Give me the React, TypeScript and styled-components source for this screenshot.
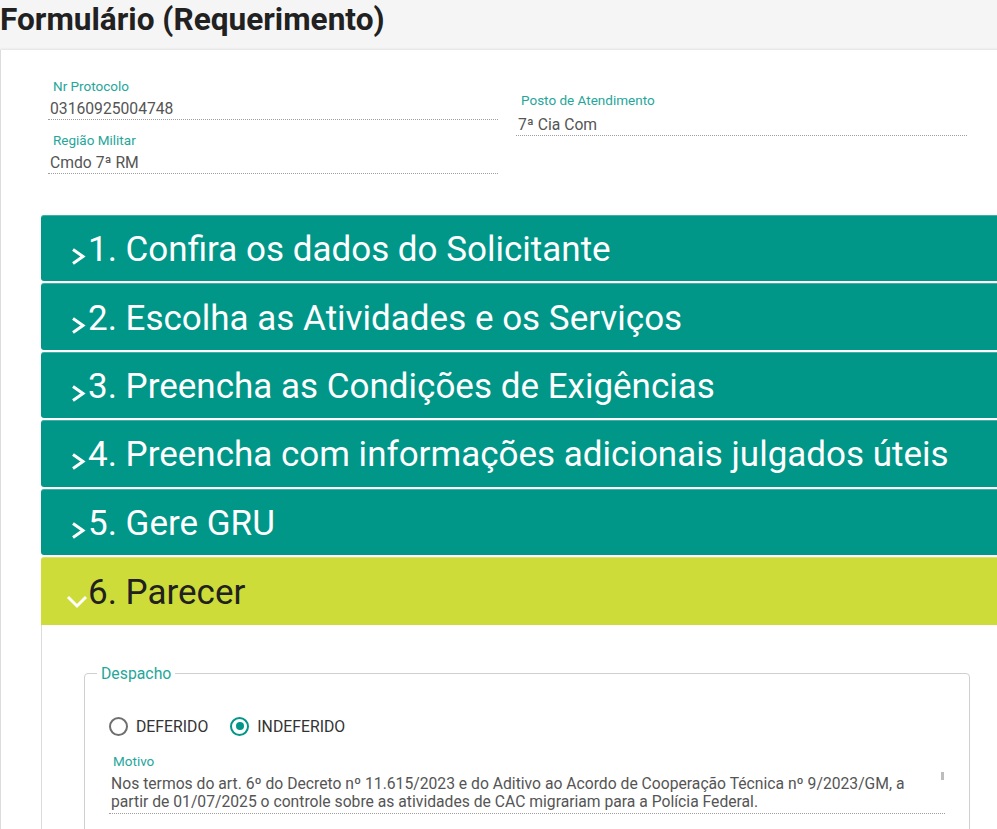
import React from "react";
import styled, { createGlobalStyle } from "styled-components";

const Global = createGlobalStyle`
  html, body { margin: 0; padding: 0; }
  body {
    background: #f5f5f5;
    overflow: hidden;
    font-family: Roboto, "Liberation Sans", Arial, sans-serif;
  }
  * { box-sizing: border-box; }
`;

const Page = styled.div`
  width: 997px;
  min-height: 829px;
  overflow: hidden;
`;

const Title = styled.h1`
  margin: 0;
  height: 50px;
  padding: 2px 0 0 0;
  font-size: 31.6px;
  line-height: 36px;
  font-weight: 700;
  color: #212121;
  white-space: nowrap;
`;

const Card = styled.div`
  width: 1060px;
  background: #fff;
  border-left: 1px solid #dcdcdc;
  box-shadow: 0 -1px 2px rgba(0, 0, 0, 0.08);
  padding-top: 29px;
  min-height: 779px;
`;

const FieldsGrid = styled.div`
  display: grid;
  grid-template-columns: 450px 451px;
  column-gap: 18px;
  padding-left: 47px;
`;

const Column = styled.div<{ $offset?: number }>`
  display: flex;
  flex-direction: column;
  gap: 13px;
  padding-top: ${(p) => p.$offset ?? 0}px;
`;

const Field = styled.div`
  display: flex;
  flex-direction: column;
`;

const FieldLabel = styled.div`
  font-size: 13.5px;
  line-height: 15px;
  color: #26a69a;
  padding-left: 5px;
  white-space: nowrap;
`;

const FieldValue = styled.div<{ $gap?: number }>`
  margin-top: ${(p) => p.$gap ?? 4}px;
  font-size: 15.7px;
  line-height: 21px;
  color: #555;
  padding-left: 2px;
  border-bottom: 1px dotted #9e9e9e;
  white-space: nowrap;
`;

const Accordion = styled.div`
  margin: 41px 0 0 40px;
  width: 972px;
`;

const ItemHeader = styled.div<{ $open?: boolean }>`
  display: flex;
  align-items: center;
  height: ${(p) => (p.$open ? "68px" : "66.4px")};
  margin-bottom: ${(p) => (p.$open ? 0 : 2)}px;
  padding: 4px 0 0 25px;
  border-radius: 3px 3px ${(p) => (p.$open ? "0 0" : "3px 3px")};
  background: ${(p) => (p.$open ? "#cddc39" : "#009688")};
  box-shadow: inset 0 1px 0 rgba(255, 255, 255, 0.25);
  color: ${(p) => (p.$open ? "#212121" : "#fff")};
  font-size: 35px;
  line-height: 40px;
  white-space: nowrap;
`;

const IconBox = styled.svg<{ $drop: number }>`
  flex: none;
  width: 22px;
  height: 20px;
  margin: ${(p) => p.$drop}px 0 0 0;
`;

const ItemBody = styled.div`
  border-left: 1px solid #dcdcdc;
  padding: 39.5px 42px 0 42px;
`;

const Fieldset = styled.fieldset`
  margin: 0;
  width: 886px;
  border: 1px solid #cfcfcf;
  border-radius: 4px;
  padding: 0;
`;

const Legend = styled.legend`
  margin-left: 12px;
  padding: 0 4px;
  font-size: 15.8px;
  line-height: 19px;
  color: #26a69a;
`;

const FieldsetBody = styled.div`
  padding: 0 24px 20px 24px;
`;

const RadioRow = styled.div`
  display: flex;
  align-items: center;
  gap: 22px;
  margin-top: 33.5px;
`;

const RadioOption = styled.label`
  display: flex;
  align-items: center;
  gap: 8px;
  font-size: 15.8px;
  line-height: 19px;
  color: #333;
  text-transform: uppercase;
`;

const RadioCircle = styled.span<{ $checked?: boolean }>`
  display: flex;
  align-items: center;
  justify-content: center;
  width: 19px;
  height: 19px;
  border-radius: 50%;
  border: 2px solid ${(p) => (p.$checked ? "#009688" : "#6f6f6f")};
  &::after {
    content: "";
    display: ${(p) => (p.$checked ? "block" : "none")};
    width: 8px;
    height: 8px;
    border-radius: 50%;
    background: #009688;
  }
`;

const MotivoLabel = styled.div`
  margin-top: 18px;
  padding-left: 4px;
  font-size: 13.5px;
  line-height: 15px;
  color: #26a69a;
`;

const TextArea = styled.div`
  position: relative;
  margin-top: 6.5px;
  padding: 0 20px 2px 2px;
  font-size: 15.7px;
  line-height: 18px;
  color: #555;
  border-bottom: 1px dotted #9e9e9e;
  white-space: nowrap;
`;

const ScrollThumb = styled.span`
  position: absolute;
  right: 1px;
  top: -3px;
  width: 3px;
  height: 8px;
  background: #bdbdbd;
`;

const RightChevron = () => (
  <IconBox $drop={12} viewBox="0 0 22 20">
    <polyline points="7,3.5 17,10.5 7,17.5" fill="none" stroke="#fff" strokeWidth="3" />
  </IconBox>
);

const DownChevron = () => (
  <IconBox $drop={20} viewBox="0 0 22 20">
    <polyline points="2,4 11,13 20,4" fill="none" stroke="#fff" strokeWidth="3" />
  </IconBox>
);

const sections = [
  "1. Confira os dados do Solicitante",
  "2. Escolha as Atividades e os Serviços",
  "3. Preencha as Condições de Exigências",
  "4. Preencha com informações adicionais julgados úteis",
  "5. Gere GRU",
];

export default function App() {
  return (
    <Page>
      <Global />
      <Title>Formulário (Requerimento)</Title>
      <Card>
        <FieldsGrid>
          <Column>
            <Field>
              <FieldLabel>Nr Protocolo</FieldLabel>
              <FieldValue>03160925004748</FieldValue>
            </Field>
            <Field>
              <FieldLabel>Região Militar</FieldLabel>
              <FieldValue>Cmdo 7ª RM</FieldValue>
            </Field>
          </Column>
          <Column $offset={14}>
            <Field>
              <FieldLabel>Posto de Atendimento</FieldLabel>
              <FieldValue $gap={6}>7ª Cia Com</FieldValue>
            </Field>
          </Column>
        </FieldsGrid>

        <Accordion>
          {sections.map((s) => (
            <ItemHeader key={s}>
              <RightChevron />
              {s}
            </ItemHeader>
          ))}
          <ItemHeader $open>
            <DownChevron />
            6. Parecer
          </ItemHeader>
          <ItemBody>
            <Fieldset>
              <Legend>Despacho</Legend>
              <FieldsetBody>
                <RadioRow>
                  <RadioOption>
                    <RadioCircle />
                    Deferido
                  </RadioOption>
                  <RadioOption>
                    <RadioCircle $checked />
                    Indeferido
                  </RadioOption>
                </RadioRow>
                <MotivoLabel>Motivo</MotivoLabel>
                <TextArea>
                  <ScrollThumb />
                  Nos termos do art. 6º do Decreto nº 11.615/2023 e do Aditivo ao Acordo de Cooperação Técnica nº 9/2023/GM, a
                  <br />
                  partir de 01/07/2025 o controle sobre as atividades de CAC migrariam para a Polícia Federal.
                </TextArea>
              </FieldsetBody>
            </Fieldset>
          </ItemBody>
        </Accordion>
      </Card>
    </Page>
  );
}
